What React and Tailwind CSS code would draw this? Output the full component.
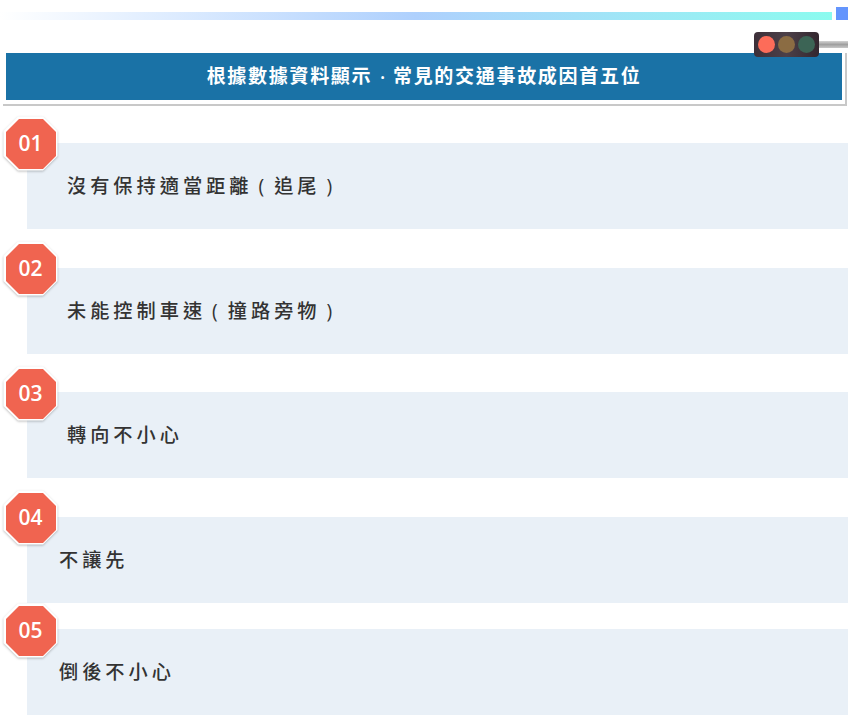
const FONT = "font-['Open_Sans','Noto_Sans_CJK_TC',sans-serif]";

const rows = [
  { n: "01", text: "沒有保持適當距離 ( 追尾 )", mt: "mt-[37px]", pl: "pl-[40px]", badge: "top-[-27px]" },
  { n: "02", text: "未能控制車速 ( 撞路旁物 )", mt: "mt-[39px]", pl: "pl-[40px]", badge: "top-[-27px]" },
  { n: "03", text: "轉向不小心", mt: "mt-[38px]", pl: "pl-[40px]", badge: "top-[-26px]" },
  { n: "04", text: "不讓先", mt: "mt-[39px]", pl: "pl-[32px]", badge: "top-[-27px]" },
  { n: "05", text: "倒後不小心", mt: "mt-[26px]", pl: "pl-[32px]", badge: "top-[-26px]" },
];

function Badge({ n, pos }) {
  return (
    <div className={`absolute left-[-24px] ${pos} w-[55px] h-[56px] flex items-center justify-center`}>
      <svg className="absolute inset-0 overflow-visible drop-shadow-[0_1px_1px_rgba(0,0,0,0.25)]" width="55" height="56" viewBox="0 0 55 56">
        <polygon points="15,0.5 40,0.5 54.5,15 54.5,40 40,54.5 15,54.5 0.5,40 0.5,15" fill="#ffffff" />
        <polygon points="16,3 40,3 53,16 53,40 40,53 16,53 3,40 3,16" fill="#f06450" />
      </svg>
      <span className="relative top-[-1px] text-white text-[21px] font-semibold leading-none">{n}</span>
    </div>
  );
}

export default function App() {
  return (
    <div className={`${FONT} w-[848px] h-[726px] bg-white overflow-hidden`}>
      <div className="flex items-end gap-[4px] pt-[7px]">
        <div className="flex-1 h-[8px] bg-gradient-to-r from-white via-[#aed0fd] to-[#8bfbef]" />
        <div className="w-[12px] h-[13px] bg-[#6495fd]" />
      </div>

      <div className="relative mt-[33px] ml-[3px] w-[844px] pl-[3px] pr-[3px] pb-[4px] border-b-2 border-r-2 border-[#c8c8c8]">
        <div className="h-[47px] bg-[#1a72a6] flex items-center justify-center text-white text-[19px] font-semibold tracking-[1.7px]">
          <span>根據數據資料顯示<span className="relative top-[2px] inline-block w-[20.7px] text-center tracking-normal">·</span>常見的交通事故成因首五位</span>
        </div>
        <div className="absolute top-[-12px] right-[-3px] w-[30px] h-[7px] bg-gradient-to-b from-[#d4d4d4] via-[#a0a0a0] to-[#c8c8c8]" />
        <div className="absolute top-[-21px] right-[26px] w-[65px] h-[25px] rounded-[4px] bg-gradient-to-r from-[#3d3039] via-[#4c4048] to-[#33272f] flex items-center justify-center gap-[3px]">
          <div className="w-[17px] h-[17px] rounded-full bg-[#fd6c59]" />
          <div className="w-[17px] h-[17px] rounded-full bg-[#8b6c43]" />
          <div className="w-[17px] h-[17px] rounded-full bg-[#3c6455]" />
        </div>
      </div>

      {rows.map((r) => (
        <div key={r.n} className={`relative ${r.mt} ml-[27px] h-[86px] bg-[#e9f0f7] ${r.pl} pt-[30px]`}>
          <Badge n={r.n} pos={r.badge} />
          <div className="text-[19.2px] leading-[26px] font-medium text-[#333333] tracking-[4px] [word-spacing:-3px]">{r.text}</div>
        </div>
      ))}
    </div>
  );
}
